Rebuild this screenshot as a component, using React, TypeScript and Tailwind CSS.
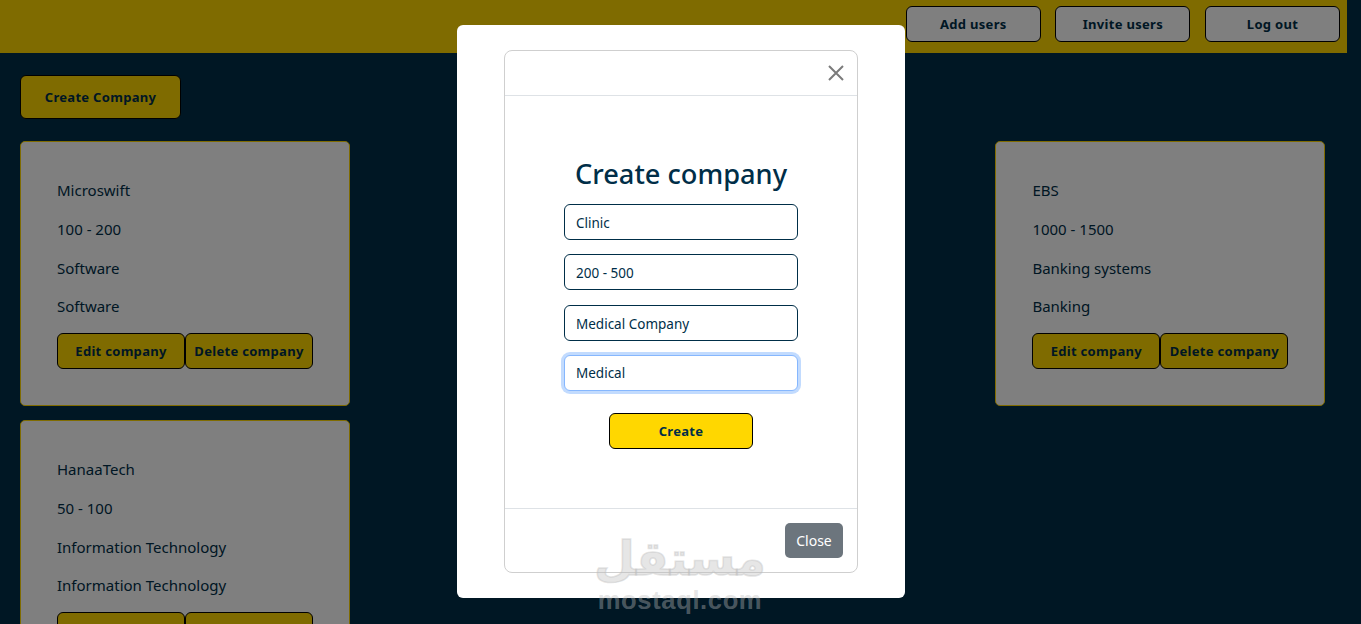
const companies = [
  { name: "Microswift", size: "100 - 200", field: "Software", sector: "Software", place: "col-start-1 row-start-1" },
  { name: "EBS", size: "1000 - 1500", field: "Banking systems", sector: "Banking", place: "col-start-3 row-start-1" },
  { name: "HanaaTech", size: "50 - 100", field: "Information Technology", sector: "Information Technology", place: "col-start-1 row-start-2" },
];

const fields = [
  { value: "Clinic", className: "mb-[14px] pt-px" },
  { value: "200 - 500", className: "mb-[15px] pt-px" },
  { value: "Medical Company", className: "mb-[14px] pt-px" },
];

function CompanyCard({ company }: { company: (typeof companies)[0] }) {
  return (
    <div className={`${company.place} h-[265px] rounded-[5px] border border-[#ffd700] bg-white pt-[36px] pl-[36px] text-[15px] leading-[24px] text-[#002e48]`}>
      <p className="mb-[15px]">{company.name}</p>
      <p className="mb-[15px]">{company.size}</p>
      <p className="mb-[14px]">{company.field}</p>
      <p className="mb-[15px]">{company.sector}</p>
      <div className="flex">
        <button className="h-[36px] w-[128px] rounded-[6px] border border-black bg-[#ffd700] text-[13px] font-bold tracking-[0.3px] text-[#002e48]">
          Edit company
        </button>
        <button className="h-[36px] w-[128px] rounded-[6px] border border-black bg-[#ffd700] text-[13px] font-bold tracking-[0.3px] text-[#002e48]">
          Delete company
        </button>
      </div>
    </div>
  );
}

export default function App() {
  return (
    <div className="relative h-[624px] overflow-hidden bg-[#002e48] font-['Noto_Sans',sans-serif]">
      {/* Navbar */}
      <div className="flex h-[53px] w-[1347px] items-start justify-end gap-[14.6px] bg-[#ffd700] pt-[6px] pr-[7px]">
        {["Add users", "Invite users", "Log out"].map((label) => (
          <button
            key={label}
            className="h-[36px] w-[135px] rounded-[6px] border border-black bg-white pt-px text-[13px] font-bold tracking-[0.3px] text-[#002e48]"
          >
            {label}
          </button>
        ))}
      </div>

      <div className="w-[1347px] pt-[22px] pl-[20px]">
        <button className="h-[44px] w-[161px] rounded-[6px] border border-black bg-[#ffd700] pt-px text-[13px] font-bold tracking-[0.3px] text-[#002e48]">
          Create Company
        </button>

        {/* Companies */}
        <div className="mt-[22px] grid w-[1305.4px] grid-cols-[330px_330px_330px] justify-between gap-y-[14px]">
          {companies.map((company) => (
            <CompanyCard key={company.name} company={company} />
          ))}
        </div>
      </div>

      {/* Backdrop */}
      <div className="absolute inset-0 bg-black/50" />

      {/* Modal */}
      <div className="absolute top-[25px] left-[457px] h-[573px] w-[448px] rounded-[6px] bg-white px-[47px] pt-[25px]">
        <div className="flex h-[523px] w-[354px] flex-col rounded-[8px] border border-[#cfcfcf]">
          <div className="flex h-[45px] shrink-0 items-center justify-end border-b border-[#dee2e6] pr-[13px]">
            <svg width="16" height="16" viewBox="0 0 16 16" className="text-[#7b7b7b]">
              <path d="M1 1l14 14M15 1L1 15" stroke="currentColor" strokeWidth="2" fill="none" />
            </svg>
          </div>

          <div className="flex flex-1 flex-col items-center pt-[59px]">
            <h2 className="mb-[11px] text-[27.2px] leading-[38px] font-medium text-[#002e48]">Create company</h2>
            {fields.map((field) => (
              <input
                key={field.value}
                readOnly
                value={field.value}
                className={`${field.className} h-[36px] w-[234px] rounded-[6px] border border-[#002e48] bg-white px-[11px] text-[13.5px] text-[#002e48] outline-none`}
              />
            ))}
            <input
              readOnly
              value="Medical"
              className="h-[36px] w-[234px] rounded-[6px] border border-[#86b7fe] bg-white px-[11px] text-[13.5px] text-[#002e48] shadow-[0_0_0_3px_rgba(13,110,253,0.25)] outline-none"
            />
            <button className="mt-[22px] h-[36px] w-[144px] rounded-[6px] border border-black bg-[#ffd700] pt-px text-[13px] font-bold tracking-[0.3px] text-[#002e48]">
              Create
            </button>
          </div>

          <div className="flex h-[64px] shrink-0 items-start justify-end border-t border-[#dee2e6] pt-[14px] pr-[14px]">
            <button className="h-[35px] w-[58px] rounded-[5px] bg-[#6c757d] text-[14px] text-white">Close</button>
          </div>
        </div>
      </div>

      {/* Watermark */}
      <div className="absolute top-[531px] left-[598px] flex w-[164px] flex-col items-center text-[#bebebe]/40">
        <span dir="rtl" className="h-[56px] font-['DejaVu_Sans',sans-serif] text-[47px] leading-[56px] font-bold [-webkit-text-stroke:1.5px_#bebebe66]">مستقل</span>
        <span className="font-['Liberation_Sans',sans-serif] text-[25.6px] leading-[26px] font-bold tracking-[0.6px]">mostaql.com</span>
      </div>
    </div>
  );
}
